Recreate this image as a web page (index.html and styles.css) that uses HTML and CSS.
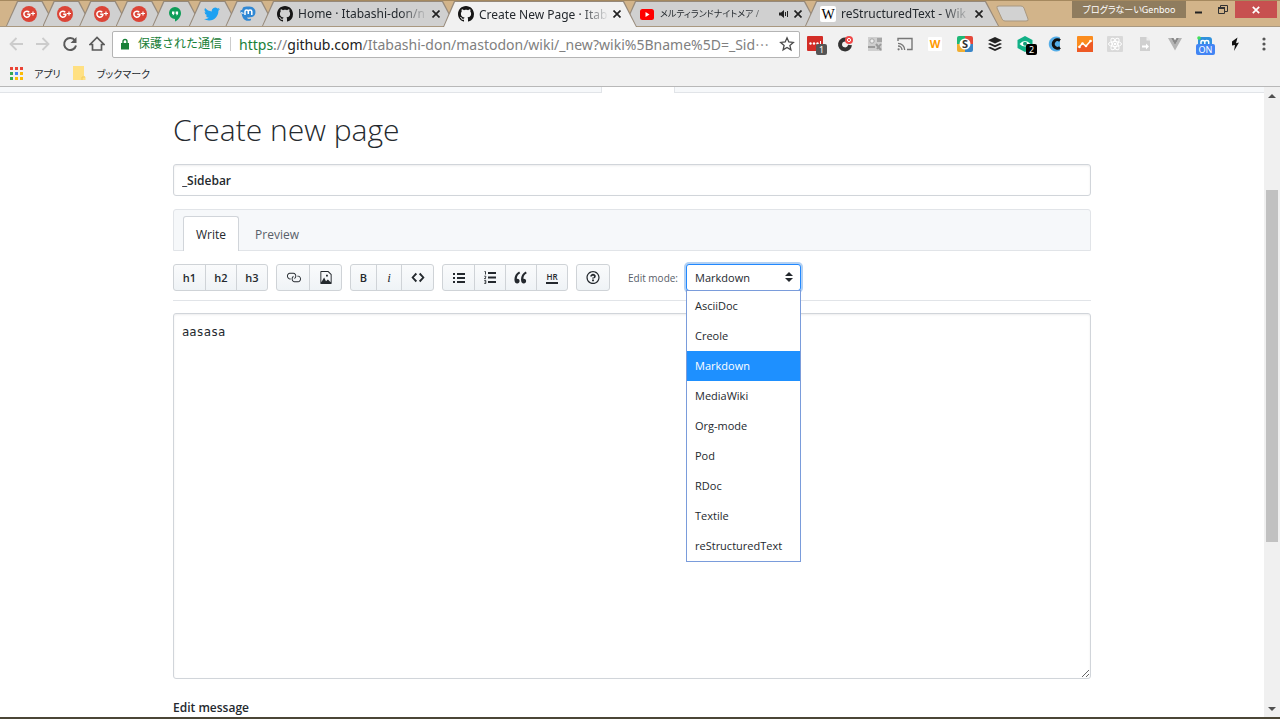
FILE: index.html
```html
<!DOCTYPE html>
<html lang="ja">
<head>
    <meta charset="UTF-8">
    <meta name="viewport" content="width=device-width, initial-scale=1.0">
    <title>Create New Page</title>
    <link rel="stylesheet" href="styles.css">
</head>
<body>

    <!-- Shared icons -->
    <svg class="sprite" aria-hidden="true">
        <symbol id="gplus" viewBox="0 0 16 16">
            <circle cx="8" cy="8" r="8" fill="#db4437"/>
            <path d="M8.2 6.2A3 3 0 1 0 8.9 8.2H6.2" fill="none" stroke="#fff" stroke-width="1.5"/>
            <path d="M10 7.5h4M12 5.5v4" stroke="#fff" stroke-width="1.2"/>
        </symbol>
        <symbol id="github" viewBox="0 0 16 16">
            <path d="M8 0C3.58 0 0 3.58 0 8c0 3.54 2.29 6.53 5.47 7.59.4.07.55-.17.55-.38 0-.19-.01-.82-.01-1.49-2.01.37-2.53-.49-2.69-.94-.09-.23-.48-.94-.82-1.13-.28-.15-.68-.52-.01-.53.63-.01 1.08.58 1.23.82.72 1.21 1.87.87 2.33.66.07-.52.28-.87.51-1.07-1.78-.2-3.64-.89-3.64-3.95 0-.87.31-1.59.82-2.15-.08-.2-.36-1.02.08-2.12 0 0 .67-.21 2.2.82.64-.18 1.32-.27 2-.27.68 0 1.36.09 2 .27 1.53-1.04 2.2-.82 2.2-.82.44 1.1.16 1.92.08 2.12.51.56.82 1.27.82 2.15 0 3.07-1.87 3.75-3.65 3.95.29.25.54.73.54 1.48 0 1.07-.01 1.93-.01 2.2 0 .21.15.46.55.38A8.013 8.013 0 0 0 16 8c0-4.42-3.58-8-8-8z" fill="#161616"/>
        </symbol>
        <symbol id="close" viewBox="0 0 8 8">
            <path d="M.5.5l7 7M7.5.5l-7 7" stroke="#222" stroke-width="1.7"/>
        </symbol>
    </svg>

    <!-- Tab strip -->
    <header class="titlebar">
        <nav class="pinned-tabs">
            <a class="tab" href="#" aria-label="Google+"><svg class="favicon"><use href="#gplus"/></svg></a>
            <a class="tab" href="#" aria-label="Google+"><svg class="favicon"><use href="#gplus"/></svg></a>
            <a class="tab" href="#" aria-label="Google+"><svg class="favicon"><use href="#gplus"/></svg></a>
            <a class="tab" href="#" aria-label="Google+"><svg class="favicon"><use href="#gplus"/></svg></a>
            <a class="tab" href="#" aria-label="Hangouts">
                <svg class="favicon" viewBox="0 0 16 16">
                    <path d="M8 1a6 6 0 0 0 0 12v2.600C11 14 14 11 14 7a6 6 0 0 0-6-6z" fill="#0f9d58"/>
                    <path d="M5 5.500h2.400V8L6.300 9.300H5.500L6 8H5zM8.700 5.500h2.400V8L10 9.300h-.8L9.700 8h-1z" fill="#fff"/>
                </svg>
            </a>
            <a class="tab" href="#" aria-label="Twitter">
                <svg class="favicon" viewBox="0 0 24 24">
                    <path d="M23.950 4.570a10 10 0 0 1-2.820.770 4.960 4.960 0 0 0 2.160-2.720c-.950.550-2 .950-3.130 1.180a4.920 4.920 0 0 0-8.380 4.480C7.690 8.100 4.070 6.130 1.640 3.160a4.920 4.920 0 0 0 1.520 6.570 4.900 4.900 0 0 1-2.230-.610v.060a4.920 4.920 0 0 0 3.950 4.830 5 5 0 0 1-2.210.080 4.940 4.940 0 0 0 4.600 3.420A9.870 9.870 0 0 1 0 19.540a13.940 13.940 0 0 0 7.550 2.210c9.050 0 14-7.500 14-13.980 0-.210 0-.420-.020-.630a9.940 9.940 0 0 0 2.420-2.570z" fill="#1da1f2"/>
                </svg>
            </a>
            <a class="tab" href="#" aria-label="Mastodon">
                <svg class="favicon" viewBox="0 0 16 16">
                    <path d="M3 1.500C5 .3 11 .3 13 1.500c2 1.500 2.800 3 2.300 6-.4 2.500-2.300 3.500-5.300 3.800-1.500.2-2.500.2-3 .1.500 1.500 2 1.800 4 1.400v1.400c-3 1.300-6.500.6-8-2.200-.8-1.500-1.300-3-1.300-4.500L.3 6.500.5 4.300 2 4z" fill="#3088d4"/>
                    <path d="M5 9V5.500c0-2 3.300-2 3.300 0V8m0-2.500c0-2 3.500-2 3.500 0V9" fill="none" stroke="#fff" stroke-width="1.500"/>
                    <path d="M1 6.500l2.500 1" stroke="#e8f2fb" stroke-width="1.200"/>
                </svg>
            </a>
        </nav>
        <nav class="open-tabs">
            <a class="tab tab-wide" href="#">
                <svg class="favicon"><use href="#github"/></svg>
                <span class="tab-title">Home · Itabashi-don/n</span>
                <svg class="tab-close"><use href="#close"/></svg>
            </a>
            <a class="tab tab-wide active" href="#">
                <svg class="favicon"><use href="#github"/></svg>
                <span class="tab-title">Create New Page · Itab</span>
                <svg class="tab-close"><use href="#close"/></svg>
            </a>
            <a class="tab tab-wide" href="#">
                <svg class="favicon" viewBox="0 0 16 16">
                    <rect x="1" y="3" width="14" height="11" rx="2.500" fill="#f00"/>
                    <path d="M6.500 6v5l4-2.500z" fill="#fff"/>
                </svg>
                <span class="tab-title kana">メルティランドナイトメア /</span>
                <svg class="tab-sound" viewBox="0 0 10 10">
                    <path d="M0 3.500h2L5 1v8L2 6.500H0z" fill="#222"/>
                    <path d="M6.500 3v4M8.500 2v6" stroke="#222" stroke-width="1"/>
                </svg>
                <svg class="tab-close"><use href="#close"/></svg>
            </a>
            <a class="tab tab-wide" href="#">
                <svg class="favicon" viewBox="0 0 16 16">
                    <rect width="16" height="16" rx="2" fill="#fff"/>
                    <text x="8" y="13" text-anchor="middle" class="icon-serif">W</text>
                </svg>
                <span class="tab-title">reStructuredText - Wik</span>
                <svg class="tab-close"><use href="#close"/></svg>
            </a>
        </nav>
        <button class="new-tab" aria-label="New tab">
            <svg viewBox="0 0 34 17" width="34" height="17">
                <path d="M3 1h22q2 0 3 2l4 11q1 2-2 2H9q-2 0-3-2L1 3q-1-2 2-2z" fill="#d2d2d2" stroke="#a99880"/>
            </svg>
        </button>
        <div class="window-controls">
            <button class="profile kana">プログラなーいGenboo</button>
            <button class="win-btn" aria-label="Minimize">
                <svg viewBox="0 0 12 12" width="12" height="12"><path d="M2 8.500h7" stroke="#222" stroke-width="2"/></svg>
            </button>
            <button class="win-btn" aria-label="Restore">
                <svg viewBox="0 0 12 12" width="12" height="12"><path d="M1.500 4.500h6v5h-6zM3.500 4V1.500h7v6H8" fill="none" stroke="#333"/><path d="M1 4h7" stroke="#333" stroke-width="2"/></svg>
            </button>
            <button class="win-btn win-close" aria-label="Close">
                <svg viewBox="0 0 8 8" width="8" height="8"><path d="M.8.8l6.400 6.400M7.200.8L.8 7.200" stroke="#fff" stroke-width="1.700"/></svg>
            </button>
        </div>
    </header>

    <!-- Address bar and extensions -->
    <div class="toolbar">
        <div class="nav-buttons">
            <button aria-label="Back"><svg viewBox="0 0 16 16" width="16" height="16"><path d="M15 8H2.500M8.500 2L2.500 8l6 6" fill="none" stroke="#ccc" stroke-width="1.800"/></svg></button>
            <button aria-label="Forward"><svg viewBox="0 0 16 16" width="16" height="16"><path d="M1 8h12.500M7.500 2l6 6-6 6" fill="none" stroke="#ccc" stroke-width="1.800"/></svg></button>
            <button aria-label="Reload"><svg viewBox="0 0 16 16" width="16" height="16"><path d="M13 4.500A6 6 0 1 0 14 9.500" fill="none" stroke="#5a5a5a" stroke-width="2"/><path d="M14.500 1v6h-6z" fill="#5a5a5a"/></svg></button>
            <button aria-label="Home"><svg viewBox="0 0 16 16" width="16" height="16"><path d="M1 8.500L8 1.500l7 7h-2.500V14h-9V8.500z" fill="none" stroke="#5a5a5a" stroke-width="1.700"/></svg></button>
        </div>
        <div class="address">
            <svg class="lock" viewBox="0 0 10 12"><rect x="1" y="5" width="8" height="6.500" fill="#188038"/><path d="M3 5.500V3.500a2 2 0 0 1 4 0v2" fill="none" stroke="#188038" stroke-width="1.400"/></svg>
            <span class="secure">保護された通信</span>
            <span class="url"><span class="scheme">https</span>://<span class="host">github.com</span>/Itabashi-don/mastodon/wiki/_new?wiki%5Bname%5D=_Sid⋯</span>
            <svg class="star" viewBox="0 0 16 16"><path d="M8 1.800l1.800 4.200 4.500.4-3.400 3 1 4.400L8 11.500l-3.900 2.300 1-4.400-3.400-3 4.500-.4z" fill="none" stroke="#4a4a4a" stroke-width="1.300"/></svg>
        </div>
        <div class="extensions">
            <button aria-label="LastPass">
                <svg viewBox="0 0 16 16"><rect width="16" height="15" rx="1" fill="#d32d27"/><circle cx="3.500" cy="7.500" r="1.200" fill="#fff"/><circle cx="7" cy="7.500" r="1.200" fill="#fff"/><circle cx="10.500" cy="7.500" r="1.200" fill="#fff"/><path d="M13.500 5v5" stroke="#fff"/></svg>
                <span class="badge badge-gray">1</span>
            </button>
            <button aria-label="Checker">
                <svg viewBox="0 0 16 16"><path d="M9 3.500A5 5 0 1 0 13 9" fill="none" stroke="#333" stroke-width="4"/><circle cx="12" cy="4" r="4" fill="#f04848"/><circle cx="12" cy="4" r="1.600" fill="none" stroke="#fff"/></svg>
            </button>
            <button aria-label="News">
                <svg viewBox="0 0 16 16"><path d="M1 1h14v14H1z" fill="#cfcfcf"/><rect x="10" y="2" width="5" height="4" fill="#a5a5a5"/><circle cx="5" cy="5" r="2.200" fill="#eee" stroke="#a5a5a5"/><path d="M1 11h7M9 8l5 6M10 13l4-5" stroke="#9a9a9a" stroke-width="2"/></svg>
            </button>
            <button aria-label="Cast">
                <svg viewBox="0 0 16 16"><path d="M1 5V2.500h14v11h-5" fill="none" stroke="#777" stroke-width="1.400"/><path d="M1 7.300A6.700 6.700 0 0 1 7.700 14M1 10a4 4 0 0 1 4 4" fill="none" stroke="#777" stroke-width="1.300"/><circle cx="1.600" cy="13.300" r="1.100" fill="#777"/></svg>
            </button>
            <button aria-label="W">
                <svg viewBox="0 0 16 16"><rect x="1" y="1" width="14" height="14" rx="1" fill="#fff"/><text x="8" y="12" text-anchor="middle" class="icon-w">W</text></svg>
            </button>
            <button aria-label="S">
                <svg viewBox="0 0 16 16"><path d="M2 0h6v8H0V2q0-2 2-2z" fill="#1fb876"/><path d="M8 0h6q2 0 2 2v6H8z" fill="#e5483b"/><path d="M8 8h8v6q0 2-2 2H8z" fill="#3a86c8"/><path d="M0 8h8v8H2q-2 0-2-2z" fill="#f0ae32"/><circle cx="8" cy="8" r="5.500" fill="#fff"/><text x="8" y="12" text-anchor="middle" class="icon-s">S</text></svg>
            </button>
            <button aria-label="Buffer">
                <svg viewBox="0 0 16 16"><path d="M8 1l7 3.200-7 3.200-7-3.200z" fill="#222"/><path d="M1 8l2-1 5 2.300L13 7l2 1-7 3.300zM1 11.800l2-1 5 2.300 5-2.300 2 1-7 3.300z" fill="#222"/></svg>
            </button>
            <button aria-label="Watcher">
                <svg viewBox="0 0 16 16"><path d="M8 0l7.500 4v8L8 16 .5 12V4z" fill="#12b187"/><path d="M2.500 8Q8 2 13.500 8 8 13 2.500 8z" fill="#fff"/><circle cx="8" cy="7.800" r="2" fill="#12a07a"/></svg>
                <span class="badge badge-black">2</span>
            </button>
            <button aria-label="C">
                <svg viewBox="0 0 16 16"><path d="M13 1.500A7.500 7.500 0 1 0 13 14.500z" fill="#55aee8"/><path d="M13 4.500a4.300 4.300 0 1 0 0 7" fill="none" stroke="#111" stroke-width="3"/></svg>
            </button>
            <button aria-label="Analytics">
                <svg viewBox="0 0 16 16"><rect width="16" height="16" rx="1" fill="#fb8c1e"/><path d="M0 12l5-4 4 3 6-6 1 1v10H0z" fill="#ee5a24"/><path d="M2 11l3.500-3.500L9 10l5-5.500" fill="none" stroke="#fff" stroke-width="1.400"/><circle cx="2.500" cy="11" r="1.300" fill="#fff"/><circle cx="5.500" cy="7.500" r="1.300" fill="#fff"/><circle cx="9" cy="10" r="1.300" fill="#fff"/><circle cx="13.500" cy="5" r="1.300" fill="#fff"/></svg>
            </button>
            <button aria-label="React">
                <svg viewBox="0 0 16 16"><rect width="16" height="16" rx="1" fill="#d9d9d9"/><g fill="none" stroke="#fff"><ellipse cx="8" cy="8" rx="6.500" ry="2.500"/><ellipse cx="8" cy="8" rx="6.500" ry="2.500" transform="rotate(60 8 8)"/><ellipse cx="8" cy="8" rx="6.500" ry="2.500" transform="rotate(120 8 8)"/></g><circle cx="8" cy="8" r="1.300" fill="#fff"/></svg>
            </button>
            <button aria-label="Document">
                <svg viewBox="0 0 16 16"><path d="M3 1h6.500L13 4.500V15H3z" fill="#d0d0d0"/><path d="M9.500 1v3.500H13" fill="#eee"/><path d="M5 9.500h4V7.500l3 3-3 3v-2H5z" fill="#fff"/></svg>
            </button>
            <button aria-label="Vue">
                <svg viewBox="0 0 16 16"><path d="M1 2h3l4 7 4-7h3L8 14.500z" fill="#b5b5b5"/><path d="M4 2h2.500L8 4.600 9.500 2H12L8 9z" fill="#888"/></svg>
            </button>
            <button aria-label="Mastodon">
                <svg viewBox="0 0 16 16"><rect x="1" y="1" width="14" height="13" rx="3" fill="#3091dc"/><path d="M4 9V6c0-2 3.800-2 3.800 0v3m0-3c0-2 3.900-2 3.900 0v3" fill="none" stroke="#fff" stroke-width="1.500"/><circle cx="2" cy="2" r="1.800" fill="#44e05a"/></svg>
                <span class="badge badge-on">ON</span>
            </button>
            <button aria-label="Bolt">
                <svg viewBox="0 0 16 16"><path d="M10.500 1.500L5 5.500v4l3-.5-1 6 5-8.500-3 .8z" fill="#111"/></svg>
            </button>
            <button aria-label="Menu">
                <svg viewBox="0 0 16 16"><circle cx="7" cy="3" r="1.600" fill="#555"/><circle cx="7" cy="8" r="1.600" fill="#555"/><circle cx="7" cy="13" r="1.600" fill="#555"/></svg>
            </button>
        </div>
    </div>

    <!-- Bookmarks bar -->
    <nav class="bookmarks">
        <a class="kana" href="#">
            <svg viewBox="0 0 13 13" width="13" height="13"><path d="M0 0h3v3H0zM5 0h3v3H5zM10 0h3v3h-3z" fill="#ea4335"/><path d="M0 5h3v3H0zM0 10h3v3H0z" fill="#34a853"/><path d="M5 5h3v3H5z" fill="#4285f4"/><path d="M10 5h3v3h-3zM5 10h3v3H5zM10 10h3v3h-3z" fill="#fbbc05"/></svg>
            アプリ
        </a>
        <a class="kana" href="#">
            <svg viewBox="0 0 13 14" width="13" height="14"><path d="M0 0h11v10l1.500 1v3H0z" fill="#ffe082"/><path d="M9 14v-3h3" fill="none" stroke="#f3cd5c"/></svg>
            ブックマーク
        </a>
    </nav>

    <!-- Web page -->
    <div class="viewport">
        <main class="page">
            <div class="repo-nav"><span class="repo-nav-tab"></span></div>

            <form class="container">
                <h1>Create new page</h1>
                <input class="title-input" type="text" value="_Sidebar" aria-label="Title">

                <div class="tabnav">
                    <button type="button" class="tabnav-tab selected">Write</button>
                    <button type="button" class="tabnav-tab">Preview</button>
                </div>

                <div class="editor-bar">
                    <div class="btn-group">
                        <button type="button">h1</button>
                        <button type="button">h2</button>
                        <button type="button">h3</button>
                    </div>
                    <div class="btn-group btn-group-wide">
                        <button type="button" aria-label="Link"><svg viewBox="0 0 16 16" width="15" height="15"><path d="M4 9h1v1H4c-1.500 0-3-1.690-3-3.500S2.550 3 4 3h4c1.450 0 3 1.690 3 3.500 0 1.410-.91 2.720-2 3.250V8.590c.58-.45 1-1.270 1-2.090C10 5.220 8.980 4 8 4H4c-.98 0-2 1.220-2 2.500S3 9 4 9zm9-3h-1v1h1c1 0 2 1.220 2 2.500S13.980 12 13 12H9c-.98 0-2-1.220-2-2.500 0-.83.42-1.640 1-2.090V6.250c-1.090.53-2 1.840-2 3.250C6 11.310 7.550 13 9 13h4c1.450 0 3-1.690 3-3.500S14.500 6 13 6z"/></svg></button>
                        <button type="button" aria-label="Image"><svg viewBox="0 0 12 16" width="12" height="15"><path d="M6 5h2v2H6V5zm6-.5V14c0 .55-.45 1-1 1H1c-.55 0-1-.45-1-1V2c0-.55.45-1 1-1h7.500L12 4.500zM11 5L8 2H1v11l3-5 2 4 2-2 3 3V5z"/></svg></button>
                    </div>
                    <div class="btn-group btn-group-wide">
                        <button type="button" class="narrow">B</button>
                        <button type="button" class="narrow italic">i</button>
                        <button type="button" aria-label="Code"><svg viewBox="0 0 14 16" width="14" height="15"><path d="M9.500 3L8 4.500 11.500 8 8 11.500 9.500 13 14 8 9.500 3zm-5 0L0 8l4.500 5L6 11.500 2.500 8 6 4.500 4.500 3z"/></svg></button>
                    </div>
                    <div class="btn-group">
                        <button type="button" aria-label="Unordered list"><svg viewBox="0 0 12 12" width="12" height="12"><path d="M0 1h2v2H0zM0 5h2v2H0zM0 9h2v2H0zM4 1h8v2H4zM4 5h8v2H4zM4 9h8v2H4z"/></svg></button>
                        <button type="button" aria-label="Ordered list"><svg viewBox="0 0 12 13" width="12" height="13"><path d="M4 1h8v2H4zM4 5.500h8v2H4zM4 10h8v2H4z"/><path d="M.5.500h1V3.500M.3 5.200h1.500v1L.4 7.700h1.600M.3 9.500h1.500v3H.3M.6 11h1" fill="none" stroke="#24292e" stroke-width=".9"/></svg></button>
                        <button type="button" aria-label="Quote"><svg viewBox="0 0 14 16" width="14" height="15"><path d="M6.160 3.500C3.730 5.060 2.550 6.670 2.550 9.360c.16-.05.3-.05.44-.05 1.270 0 2.500.86 2.500 2.410 0 1.610-1.030 2.610-2.500 2.610-1.900 0-2.990-1.520-2.990-4.250 0-3.800 1.750-6.530 5.020-8.420L6.160 3.500zm7 0c-2.430 1.560-3.610 3.170-3.610 5.860.16-.05.3-.05.44-.05 1.270 0 2.500.86 2.500 2.410 0 1.610-1.030 2.610-2.500 2.610-1.890 0-2.980-1.520-2.980-4.250 0-3.800 1.750-6.530 5.020-8.420l1.140 1.840z"/></svg></button>
                        <button type="button" class="hr-btn"><span>HR</span></button>
                    </div>
                    <div class="btn-group btn-group-wide">
                        <button type="button" aria-label="Help"><svg viewBox="0 0 14 16" width="14" height="15"><path d="M6 10h2v2H6v-2zm4-3.500C10 8.640 8 9 8 9H6c0-.55.45-1 1-1h.5c.28 0 .5-.22.5-.5v-1c0-.28-.22-.5-.5-.5h-1c-.28 0-.5.22-.5.5V7H4c0-1.500 1.500-3 3-3s3 1 3 2.500zM7 2.300c3.140 0 5.700 2.560 5.700 5.700s-2.560 5.700-5.700 5.700A5.710 5.710 0 0 1 1.300 8c0-3.140 2.560-5.700 5.700-5.700zM7 1C3.140 1 0 4.140 0 8s3.140 7 7 7 7-3.140 7-7-3.140-7-7-7z"/></svg></button>
                    </div>

                    <label class="mode-label" for="mode">Edit mode:</label>
                    <div class="mode">
                        <select id="mode">
                            <option>AsciiDoc</option>
                            <option>Creole</option>
                            <option selected>Markdown</option>
                            <option>MediaWiki</option>
                            <option>Org-mode</option>
                            <option>Pod</option>
                            <option>RDoc</option>
                            <option>Textile</option>
                            <option>reStructuredText</option>
                        </select>
                        <svg class="mode-arrows" viewBox="0 0 8 10"><path d="M4 0l4 4H0zM0 6h8l-4 4z" fill="#24292e"/></svg>
                        <ul class="mode-list">
                            <li>AsciiDoc</li>
                            <li>Creole</li>
                            <li class="current">Markdown</li>
                            <li>MediaWiki</li>
                            <li>Org-mode</li>
                            <li>Pod</li>
                            <li>RDoc</li>
                            <li>Textile</li>
                            <li>reStructuredText</li>
                        </ul>
                    </div>
                </div>

                <textarea class="editor" aria-label="Page content" spellcheck="false">aasasa</textarea>
                <p class="message-label">Edit message</p>
            </form>
        </main>

        <!-- Scrollbar -->
        <div class="scrollbar">
            <svg viewBox="0 0 8 4" width="8" height="4"><path d="M4 0l4 4H0z" fill="#505050"/></svg>
            <div class="track"><div class="thumb"></div></div>
            <svg viewBox="0 0 8 4" width="8" height="4"><path d="M0 0h8L4 4z" fill="#505050"/></svg>
        </div>
    </div>

</body>
</html>
```

FILE: styles.css
```css
/* Reset some default styling */
* {
    margin: 0;
    padding: 0;
    box-sizing: border-box;
}

body {
    display: flex;
    flex-direction: column;
    height: 100vh;
    overflow: hidden;
    background-color: #fff;
    border-bottom: 2px solid #4b4636;
    color: #24292e;
    font-family: "Noto Sans", "Noto Sans CJK JP", sans-serif;
    font-size: 12px;
}

button {
    background: none;
    border: none;
    color: inherit;
    font-family: inherit;
}

a {
    color: inherit;
    text-decoration: none;
}

svg {
    flex-shrink: 0;
}

.sprite {
    display: none;
}

/* Japanese text set with proportional widths */
.kana {
    font-feature-settings: "palt";
}

/* Tab strip */
.titlebar {
    display: flex;
    flex-shrink: 0;
    height: 27px;
    padding-left: 6px;
    background-color: #d2b48a;
    border-top: 1px solid #a5895f;
    border-bottom: 1px solid #a99880;
}

.pinned-tabs {
    display: flex;
    width: 256px;
}

.open-tabs {
    display: flex;
    margin-bottom: -1px;
}

.tab {
    position: relative;
    display: flex;
    flex: 1;
    align-items: center;
    justify-content: center;
    height: 25px;
    margin-right: -13px;
    padding-right: 4px;
    background-color: #96897a;
    clip-path: polygon(0 100%, 11px 0, calc(100% - 13px) 0, 100% 100%);
}

.tab::before {
    content: "";
    position: absolute;
    inset: 1px 1px 0;
    background-color: #d0d0d0;
    clip-path: polygon(0 100%, 11px 0, calc(100% - 13px) 0, 100% 100%);
}

.tab > * {
    position: relative;
}

.tab-wide {
    flex: none;
    justify-content: flex-start;
    width: 194px;
    padding: 0 16px 0 15px;
}

.tab.active {
    z-index: 1;
    height: 26px;
}

.tab.active::before {
    background-color: #f1f1f1;
}

.favicon {
    width: 16px;
    height: 16px;
}

.tab-title {
    flex: 1;
    margin: 0 4px 0 5px;
    white-space: nowrap;
    mask-image: linear-gradient(to right, #000 calc(100% - 28px), transparent);
}

.tab-title.kana {
    font-size: 9px;
}

.tab-close {
    width: 8px;
    height: 8px;
}

.tab-sound {
    width: 10px;
    height: 10px;
    margin-right: 5px;
}

.new-tab {
    align-self: center;
    height: 17px;
    margin-left: 10px;
}

.window-controls {
    display: flex;
    height: 17px;
    margin-left: auto;
    padding-right: 3px;
}

.profile {
    width: 114px;
    margin-right: 1px;
    background-color: #8f7c5e;
    color: #fff;
    font-size: 9px;
}

.win-btn {
    display: flex;
    align-items: center;
    justify-content: center;
    width: 24px;
}

.win-close {
    width: 42px;
    background-color: #c75050;
}

/* Address bar and extensions */
.toolbar {
    display: flex;
    flex-shrink: 0;
    align-items: center;
    height: 34px;
    padding-left: 2px;
    background-color: #f1f1f1;
}

.nav-buttons {
    display: flex;
    width: 110px;
}

.nav-buttons button {
    width: 27px;
    height: 16px;
}

.address {
    display: flex;
    flex: 1;
    align-items: center;
    min-width: 0;
    height: 27px;
    padding: 0 4px 0 7px;
    background-color: #fff;
    border: 1px solid #b4b4b4;
    border-radius: 2px;
}

.lock {
    width: 10px;
    height: 12px;
    margin-right: 8px;
}

.secure {
    flex-shrink: 0;
    padding-right: 8px;
    border-right: 1px solid #ccc;
    color: #188038;
    line-height: 14px;
}

.url {
    flex: 1;
    margin-left: 8px;
    overflow: hidden;
    color: #808080;
    font-size: 14px;
    white-space: nowrap;
}

.scheme {
    color: #188038;
}

.host {
    color: #222;
}

.star {
    width: 16px;
    height: 16px;
}

.extensions {
    display: flex;
}

.extensions button {
    position: relative;
    width: 30px;
    height: 16px;
}

.extensions svg {
    width: 16px;
    height: 16px;
}

.badge {
    position: absolute;
    left: 16px;
    top: 8px;
    width: 11px;
    height: 11px;
    border-radius: 2px;
    color: #fff;
    font-size: 9px;
    line-height: 11px;
}

.badge-gray {
    background-color: #555;
}

.badge-black {
    background-color: #000;
}

.badge-on {
    left: 6px;
    width: 19px;
    background-color: #4285f4;
}

.icon-serif {
    font-family: "Liberation Serif", serif;
    font-size: 14px;
}

.icon-w {
    fill: #f90;
    font-size: 11px;
    font-weight: 700;
}

.icon-s {
    fill: #333;
    font-size: 11px;
    font-weight: 700;
}

/* Bookmarks bar */
.bookmarks {
    display: flex;
    flex-shrink: 0;
    gap: 12px;
    height: 26px;
    padding-left: 10px;
    background-color: #f1f1f1;
    border-bottom: 1px solid #b8b8b8;
    font-size: 10px;
}

.bookmarks a {
    display: flex;
    align-items: center;
    gap: 11px;
    height: 24px;
}

/* Web page */
.viewport {
    display: flex;
    flex: 1;
    min-height: 0;
}

.page {
    flex: 1;
    overflow: hidden;
    font-family: "Open Sans", sans-serif;
}

.repo-nav {
    height: 6px;
    padding-left: 601px;
    background-color: #f6f8fa;
    border-bottom: 1px solid #e1e4e8;
}

.repo-nav-tab {
    display: block;
    width: 74px;
    height: 6px;
    background-color: #fff;
    border: solid #e1e4e8;
    border-width: 0 1px;
}

.container {
    width: 100%;
    max-width: 918px;
    margin: 0 auto;
    padding-top: 15px;
}

h1 {
    margin-bottom: 12px;
    font-size: 30px;
    font-weight: 300;
    line-height: 44px;
}

.title-input {
    display: block;
    width: 100%;
    height: 32px;
    padding: 0 8px;
    border: 1px solid #d1d5da;
    border-radius: 3px;
    box-shadow: inset 0 1px 2px rgba(27, 31, 35, 0.08);
    color: #24292e;
    font-family: inherit;
    font-size: 12px;
    font-weight: 600;
}

.tabnav {
    display: flex;
    height: 42px;
    margin-top: 13px;
    padding: 6px 9px 0;
    background-color: #f6f8fa;
    border: 1px solid #e1e4e8;
    border-radius: 3px 3px 0 0;
}

.tabnav-tab {
    height: 35px;
    padding: 0 12px;
    border: 1px solid transparent;
    border-bottom: none;
    color: #586069;
    font-size: 12px;
}

.tabnav-tab.selected {
    margin-right: 3px;
    background-color: #fff;
    border-color: #d1d5da;
    border-radius: 3px 3px 0 0;
    color: #24292e;
}

/* Editor buttons */
.editor-bar {
    display: flex;
    align-items: center;
    gap: 8px;
    padding: 13px 0 9px;
    border-bottom: 1px solid #e1e4e8;
}

.btn-group {
    display: flex;
    border: 1px solid #cfd3d7;
    border-radius: 3px;
    background-image: linear-gradient(#fafbfc, #eff3f6);
}

.btn-group button {
    display: flex;
    align-items: center;
    justify-content: center;
    width: 31px;
    height: 25px;
    font-size: 11px;
    font-weight: 600;
}

.btn-group-wide button {
    width: 32px;
}

.btn-group button + button {
    border-left: 1px solid #cfd3d7;
}

.btn-group .narrow {
    width: 25px;
}

.btn-group svg {
    fill: #24292e;
}

.btn-group .italic {
    font-family: "Liberation Serif", serif;
    font-size: 13px;
    font-style: italic;
    font-weight: 400;
}

.hr-btn span {
    border-bottom: 2px solid #24292e;
    font-size: 8px;
    line-height: 10px;
}

.mode-label {
    margin-left: 10px;
    color: #586069;
    font-size: 10px;
}

.mode {
    position: relative;
    width: 115px;
}

.mode select {
    display: block;
    width: 100%;
    height: 27px;
    padding: 0 8px;
    appearance: none;
    background-color: #fff;
    border: 1px solid #2188ff;
    border-radius: 3px;
    box-shadow: 0 0 0 2px rgba(3, 102, 214, 0.3);
    color: #24292e;
    font-family: inherit;
    font-size: 11px;
}

.mode-arrows {
    position: absolute;
    right: 8px;
    top: 8px;
    width: 8px;
    height: 10px;
}

.mode-list {
    position: absolute;
    top: 26px;
    left: 0;
    right: 0;
    background-color: #fff;
    border: 1px solid #7a9cdb;
    list-style: none;
    font-size: 11px;
    line-height: 30px;
}

.mode-list li {
    padding-left: 8px;
}

.mode-list .current {
    background-color: #1e90ff;
    color: #fff;
}

.editor {
    display: block;
    width: 100%;
    height: 366px;
    margin-top: 12px;
    padding: 8px;
    border: 1px solid #d1d5da;
    border-radius: 3px;
    box-shadow: inset 0 1px 2px rgba(27, 31, 35, 0.08);
    color: #24292e;
    font-family: "DejaVu Sans Mono", monospace;
    font-size: 12px;
    line-height: 20px;
    resize: vertical;
}

.message-label {
    margin-top: 20px;
    font-size: 12px;
    font-weight: 600;
    line-height: 18px;
}

/* Scrollbar */
.scrollbar {
    display: flex;
    flex-direction: column;
    align-items: center;
    width: 16px;
    padding: 7px 0 6px;
    background-color: #f0f0f0;
}

.track {
    flex: 1;
    width: 12px;
    padding-top: 92px;
}

.thumb {
    height: 68%;
    background-color: #c1c1c1;
}
```
